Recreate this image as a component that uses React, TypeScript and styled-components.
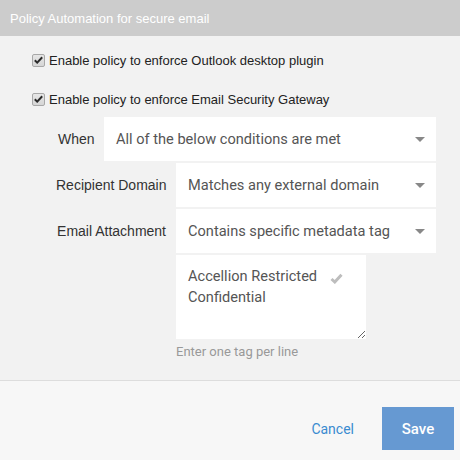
import styled, { createGlobalStyle } from "styled-components";

const GlobalStyle = createGlobalStyle`
  html, body {
    margin: 0;
    padding: 0;
    background: #f7f7f7;
  }
  body {
    font-family: "Liberation Sans", Arial, sans-serif;
  }
`;

type CheckRowProps = {
  label: string;
};

const CheckRow = ({ label }: CheckRowProps) => {
  return (
    <S.CheckRow>
      <S.CheckBox>
        <svg width="9" height="8" viewBox="0 0 9 8">
          <path
            d="M0.8 4.2 L3.2 6.6 L8.2 1.2"
            fill="none"
            stroke="#2a2a2a"
            strokeWidth="2"
          />
        </svg>
      </S.CheckBox>
      <S.CheckLabel>{label}</S.CheckLabel>
    </S.CheckRow>
  );
};

type SelectRowProps = {
  label: string;
  value: string;
  labelWidth: number;
  align?: "left" | "right";
};

const SelectRow = ({ label, value, labelWidth, align = "left" }: SelectRowProps) => {
  return (
    <S.Row>
      <S.Label $width={labelWidth} $align={align}>
        {label}
      </S.Label>
      <S.Select>
        <S.SelectText>{value}</S.SelectText>
        <S.Caret />
      </S.Select>
    </S.Row>
  );
};

export default function App() {
  return (
    <>
      <GlobalStyle />
      <S.Dialog>
        <S.Header>Policy Automation for secure email</S.Header>
        <S.Body>
          <S.Checks>
            <CheckRow label="Enable policy to enforce Outlook desktop plugin" />
            <CheckRow label="Enable policy to enforce Email Security Gateway" />
          </S.Checks>
          <S.Form>
            <SelectRow label="When" value="All of the below conditions are met" labelWidth={48} />
            <SelectRow
              label="Recipient Domain"
              value="Matches any external domain"
              labelWidth={120}
              align="right"
            />
            <SelectRow
              label="Email Attachment"
              value="Contains specific metadata tag"
              labelWidth={120}
              align="right"
            />
            <S.TagBlock>
              <S.TextAreaWrap>
                <S.TextArea defaultValue={"Accellion Restricted\nConfidential"} />
                <S.TagCheck>
                  <svg width="13" height="11" viewBox="0 0 13 11">
                    <path
                      d="M1.5 6 L4.8 9 L11.5 1.8"
                      fill="none"
                      stroke="#bdbdbd"
                      strokeWidth="3"
                    />
                  </svg>
                </S.TagCheck>
              </S.TextAreaWrap>
              <S.Hint>Enter one tag per line</S.Hint>
            </S.TagBlock>
          </S.Form>
        </S.Body>
        <S.Footer>
          <S.CancelButton>Cancel</S.CancelButton>
          <S.SaveButton>Save</S.SaveButton>
        </S.Footer>
      </S.Dialog>
    </>
  );
}

const S = {
  Dialog: styled.div`
    width: 460px;
    display: flex;
    flex-direction: column;
  `,
  //
  Header: styled.div`
    height: 36px;
    display: flex;
    align-items: center;
    padding-left: 10px;
    background-color: #cccccc;
    color: #fff;
    font-size: 13px;
  `,
  //
  Body: styled.div`
    height: 345px;
    box-sizing: border-box;
    padding: 14px 24px 0 32px;
    background-color: #f2f2f2;
    border-bottom: 1px solid #dddddd;
  `,
  Checks: styled.div`
    display: flex;
    flex-direction: column;
    gap: 19px;
  `,
  CheckRow: styled.div`
    height: 20px;
    display: flex;
    align-items: center;
  `,
  CheckBox: styled.span`
    width: 11px;
    height: 11px;
    display: flex;
    align-items: center;
    justify-content: center;
    border: 1px solid #a8a8a8;
    border-radius: 2px;
    background: linear-gradient(#e6e6e6, #d6d6d6);
  `,
  CheckLabel: styled.span`
    margin-left: 4px;
    font-size: 13px;
    color: #222;
  `,
  //
  Form: styled.div`
    margin-top: 8px;
    display: flex;
    flex-direction: column;
    gap: 2px;
  `,
  Row: styled.div`
    display: flex;
    align-items: center;
    padding-left: 24px;
  `,
  Label: styled.span<{ $width: number; $align: "left" | "right" }>`
    width: ${(p) => p.$width}px;
    flex-shrink: 0;
    box-sizing: border-box;
    padding: ${(p) => (p.$align === "right" ? "0 10px 0 0" : "0 0 0 2px")};
    text-align: ${(p) => p.$align};
    white-space: nowrap;
    font-size: 14px;
    color: #333;
  `,
  Select: styled.div`
    flex: 1;
    height: 44px;
    display: flex;
    align-items: center;
    padding: 0 11px 0 12px;
    background-color: #fff;
  `,
  SelectText: styled.span`
    flex: 1;
    font-family: Roboto, "Liberation Sans", sans-serif;
    font-size: 14.6px;
    color: #555;
  `,
  Caret: styled.span`
    width: 0;
    height: 0;
    border-left: 5px solid transparent;
    border-right: 5px solid transparent;
    border-top: 5px solid #888;
  `,
  //
  TagBlock: styled.div`
    padding-left: 144px;
    display: flex;
    flex-direction: column;
  `,
  TextAreaWrap: styled.div`
    position: relative;
    width: 190px;
    height: 84px;
  `,
  TextArea: styled.textarea`
    width: 100%;
    height: 100%;
    box-sizing: border-box;
    resize: both;
    border: none;
    outline: none;
    padding: 11px 40px 0 12px;
    background-color: #fff;
    font-family: Roboto, "Liberation Sans", sans-serif;
    font-size: 14.6px;
    line-height: 21px;
    color: #555;
  `,
  TagCheck: styled.span`
    position: absolute;
    top: 18px;
    right: 23px;
    display: flex;
  `,
  Hint: styled.span`
    margin-top: 5px;
    font-family: Roboto, "Liberation Sans", sans-serif;
    font-size: 13px;
    color: #999;
  `,
  //
  Footer: styled.div`
    height: 78px;
    box-sizing: border-box;
    display: flex;
    align-items: flex-start;
    justify-content: flex-end;
    padding: 26px 6px 0 0;
    background-color: #f7f7f7;
  `,
  CancelButton: styled.button`
    height: 43px;
    margin-right: 28px;
    padding: 0;
    border: none;
    background: none;
    font-family: Roboto, "Liberation Sans", sans-serif;
    font-size: 14px;
    color: #3a8bd0;
    cursor: pointer;
  `,
  SaveButton: styled.button`
    width: 72px;
    height: 43px;
    border: none;
    background-color: #6699d2;
    font-family: Roboto, "Liberation Sans", sans-serif;
    font-size: 15px;
    font-weight: 500;
    color: #fff;
    cursor: pointer;
  `,
};
